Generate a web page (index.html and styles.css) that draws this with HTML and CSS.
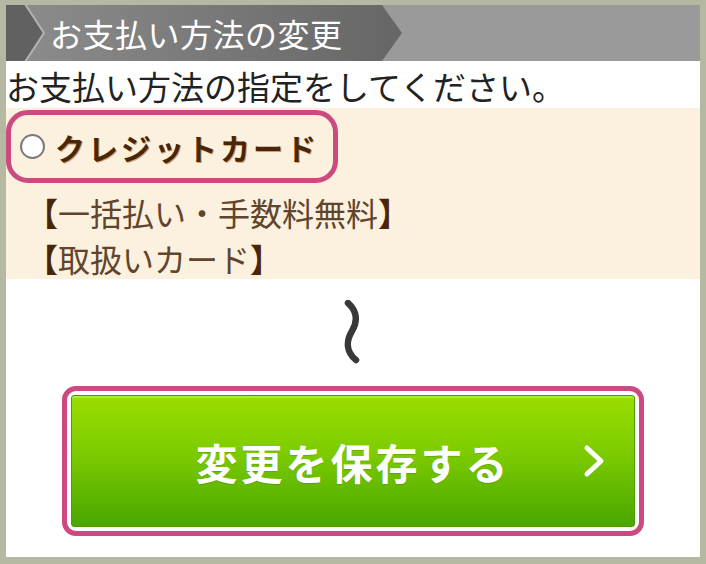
FILE: index.html
```html
<!DOCTYPE html>
<html lang="ja">
<head>
    <meta charset="UTF-8">
    <meta name="viewport" content="width=device-width, initial-scale=1.0">
    <title>お支払い方法の変更</title>
    <link rel="stylesheet" href="styles.css">
</head>
<body>
    <div class="frame">
        <div class="panel">
            <div class="heading">
                <div class="heading-title">
                    <svg class="heading-cap" width="44" height="56" viewBox="0 0 44 56">
                        <polygon points="0,0 19,0 37,28 19,56 0,56" fill="#616161"/>
                        <polyline points="19,-1 38,28 19,57" fill="none" stroke="#b2b2b2" stroke-width="2"/>
                    </svg>
                    <span>お支払い方法の変更</span>
                </div>
            </div>

            <p class="lead">お支払い方法の指定をしてください。</p>

            <div class="method">
                <div class="method-choice">
                    <span class="radio"></span>
                    <span class="method-name">クレジットカード</span>
                </div>
                <p class="method-note"><b>【</b>一括払い・手数料無料<b>】</b></p>
                <p class="method-note"><b>【</b>取扱いカード<b>】</b></p>
            </div>

            <div class="omit">
                <svg width="22" height="64" viewBox="0 0 22 64">
                    <path d="M6 3 C15 11, 16 21, 10 31 C4 41, 4 52, 14 60" fill="none" stroke="#383838" stroke-width="6.5" stroke-linecap="round"/>
                </svg>
            </div>

            <div class="save-wrap">
                <button class="save-btn">
                    <span></span>
                    <span class="save-label">変更を保存する</span>
                    <svg class="save-arrow" width="24" height="34" viewBox="0 0 24 34">
                        <polyline points="5,4 19,17 5,30" fill="none" stroke="#fff" stroke-width="5" stroke-linecap="round" stroke-linejoin="round"/>
                    </svg>
                </button>
            </div>
        </div>
    </div>
</body>
</html>
```

FILE: styles.css
```css
body {
    margin: 0;
    background: #b5b9a1;
    font-family: "Noto Sans CJK JP", "Noto Sans", sans-serif;
}
.frame {
    width: 706px;
    height: 564px;
    box-sizing: border-box;
    padding: 5px 6px 7px 6px;
}
.panel {
    height: 552px;
    background: #fff;
}
.heading {
    height: 56px;
    background: #9a9a9a;
}
.heading-title {
    display: flex;
    align-items: center;
    width: 396px;
    height: 56px;
    background: linear-gradient(to right, #8d8d8d, #666);
    clip-path: polygon(0 0, 376px 0, 396px 50%, 376px 100%, 0 100%);
    color: #fff;
    font-size: 32px;
    letter-spacing: 0.5px;
    line-height: 56px;
}
.heading-cap {
    flex: none;
    display: block;
}
.lead {
    margin: 0;
    padding-top: 4px;
    font-size: 33px;
    line-height: 43px;
    color: #222;
    white-space: nowrap;
}
.method {
    background: #fcf1df;
    padding-top: 2px;
    height: 171px;
    box-sizing: border-box;
}
.method-choice {
    display: inline-flex;
    align-items: center;
    gap: 10px;
    height: 63px;
    padding: 0 14px 0 9px;
    border: 5px solid #cc4a7f;
    border-radius: 22px;
}
.radio {
    width: 21px;
    height: 21px;
    border: 2px solid #7a7a7a;
    border-radius: 50%;
    background: #fff;
}
.method-name {
    font-size: 30px;
    font-weight: bold;
    letter-spacing: 3px;
    color: #4a2608;
    text-shadow: 1px 1px 0 #d7a06a;
}
.method-note {
    margin: 0;
    padding-left: 20px;
    font-size: 32px;
    line-height: 46px;
    color: #60452c;
}
.method-note:first-of-type {
    margin-top: 6px;
}
.method-note b {
    font-weight: bold;
    color: #4a2608;
}
.omit {
    display: flex;
    justify-content: center;
    padding: 21px 0 22px;
}
.omit svg {
    display: block;
}
.save-wrap {
    width: 582px;
    height: 150px;
    box-sizing: border-box;
    margin: 0 auto;
    padding: 4px;
    border: 5px solid #cc4a7f;
    border-radius: 14px;
    background: #fff;
}
.save-btn {
    display: grid;
    grid-template-columns: 1fr auto 1fr;
    align-items: center;
    width: 100%;
    height: 100%;
    padding: 0 28px;
    border: 1px solid #4f9a00;
    border-radius: 3px;
    background: linear-gradient(to bottom, #9ade00, #7ccb00 45%, #49a600);
    box-shadow: inset 0 2px 0 rgba(255, 255, 255, 0.25);
    font-family: "Noto Sans CJK JP", "Noto Sans", sans-serif;
    cursor: pointer;
}
.save-label {
    font-size: 42px;
    font-weight: bold;
    letter-spacing: 3px;
    color: #fff;
    text-shadow: 0 1px 1px rgba(0, 0, 0, 0.15);
}
.save-arrow {
    justify-self: end;
    display: block;
}
```
